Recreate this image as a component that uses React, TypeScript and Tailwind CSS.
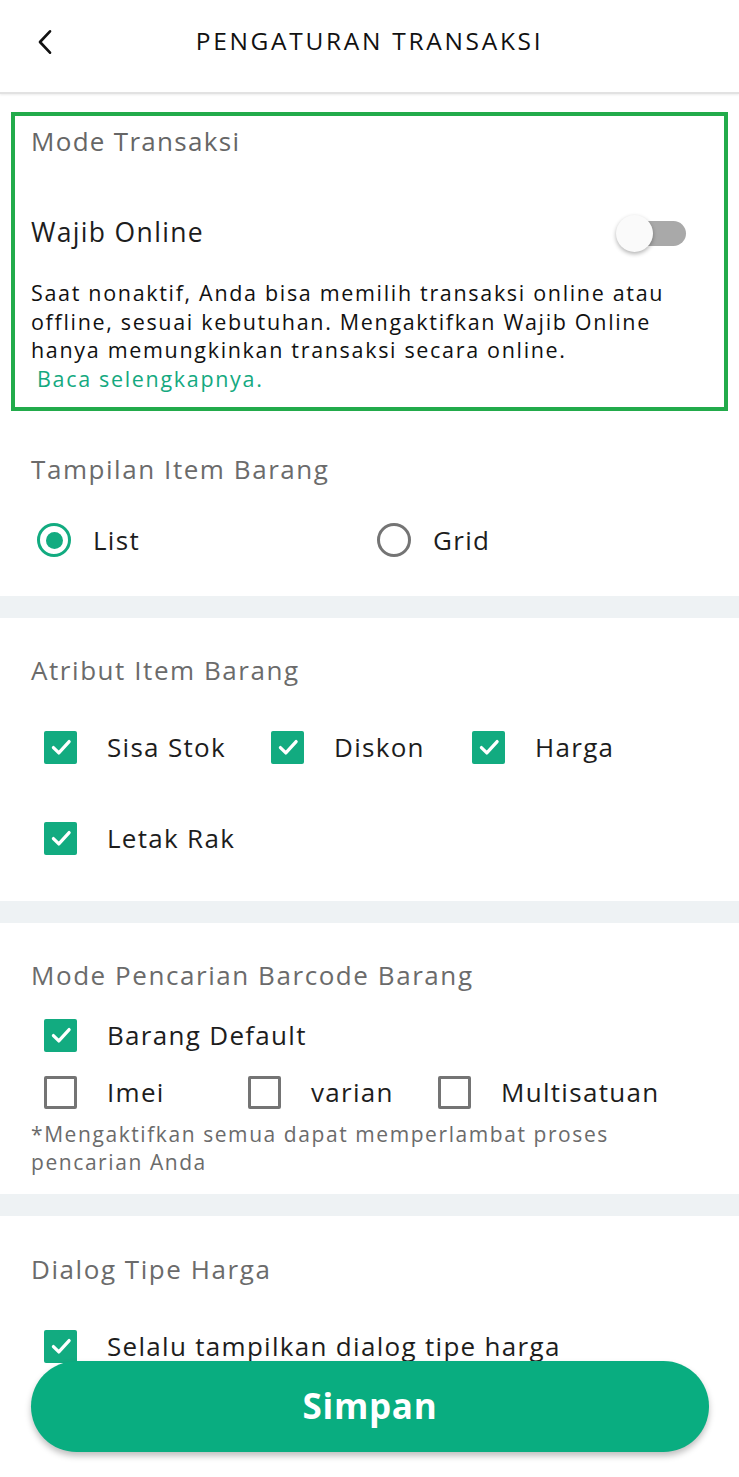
import type { ReactNode } from "react"

const font = { fontFamily: '"Open Sans", "Noto Sans", sans-serif' }

const Check = ({ checked = true }: { checked?: boolean }) =>
  checked ? (
    <span className="flex h-[33px] w-[33px] shrink-0 items-center justify-center rounded-[2px] bg-[#12ab80]">
      <svg viewBox="0 0 24 24" className="h-[26px] w-[26px]" fill="none" stroke="white" strokeWidth="3" strokeLinecap="round" strokeLinejoin="round">
        <polyline points="5,12.5 10,17.5 19.5,7" />
      </svg>
    </span>
  ) : (
    <span className="h-[33px] w-[33px] shrink-0 rounded-[2px] border-[3px] border-[#747474] bg-white" />
  )

const Radio = ({ checked }: { checked: boolean }) => (
  <span
    className={
      checked
        ? "flex h-[34px] w-[34px] items-center justify-center rounded-full border-[3.5px] border-[#12ab80]"
        : "h-[34px] w-[34px] rounded-full border-[3.5px] border-[#747474]"
    }
  >
    {checked && <span className="h-[17px] w-[17px] rounded-full bg-[#12ab80]" />}
  </span>
)

const Item = ({ checked = true, label, className = "" }: { checked?: boolean; label: string; className?: string }) => (
  <div className={`flex items-center ${className}`}>
    <Check checked={checked} />
    <span className="ml-[30px] whitespace-nowrap text-[26px] tracking-[0.05em] text-[#1d1d1d]">{label}</span>
  </div>
)

const Title = ({ children, className = "" }: { children: ReactNode; className?: string }) => (
  <div className={`flex h-[40px] items-center text-[26px] tracking-[0.06em] text-[#6b6b6b] ${className}`}>{children}</div>
)

const Divider = ({ className = "" }: { className?: string }) => <div className={`h-[22px] bg-[#eef2f4] ${className}`} />

export default function App() {
  return (
    <div className="relative h-[1477px] w-[739px] overflow-hidden bg-white" style={font}>
      <header className="relative flex h-[94px] items-center justify-center border-b-2 border-[#e2e2e2] shadow-[0_1px_2px_rgba(0,0,0,0.08)]">
        <svg viewBox="0 0 24 24" className="absolute left-[30px] top-[26px] h-[32px] w-[32px]" fill="none" stroke="#111" strokeWidth="2" strokeLinecap="round" strokeLinejoin="round">
          <polyline points="15,4 7.5,12 15,20" />
        </svg>
        <h1 className="-mt-[10px] text-[24.5px] tracking-[0.11em] text-[#111]">PENGATURAN TRANSAKSI</h1>
      </header>

      <section className="mx-[11px] mt-[18px] border-4 border-[#22ab4b] pl-4 pr-[38px]">
        <div className="flex h-[50px] items-center text-[26px] tracking-[0.05em] text-[#666]">Mode Transaksi</div>
        <div className="mt-[42px] flex h-[50px] items-center justify-between">
          <span className="text-[26.5px] tracking-[0.05em] text-[#1d1d1d]">Wajib Online</span>
          <div className="relative h-[37px] w-[70px]">
            <span className="absolute right-0 top-[6px] h-[25px] w-[56px] rounded-full bg-[#a9a9a9]" />
            <span className="absolute left-0 top-0 h-[37px] w-[37px] rounded-full bg-[#fafafa] shadow-[0_2px_4px_rgba(0,0,0,0.3)]" />
          </div>
        </div>
        <p className="mt-[21px] pb-[14px] text-[21.5px] leading-[28.5px] tracking-[0.078em] text-[#111]">
          Saat nonaktif, Anda bisa memilih transaksi online atau
          <br />
          offline, sesuai kebutuhan. Mengaktifkan Wajib Online
          <br />
          hanya memungkinkan transaksi secara online.
          <br />
          <span className="ml-[6px] text-[#14a97f]">Baca selengkapnya.</span>
        </p>
      </section>

      <div className="px-[31px]">
        <Title className="mt-[38px]">Tampilan Item Barang</Title>
        <div className="mt-[31px] flex h-[40px] items-center pl-[6px]">
          <div className="flex w-[340px] items-center">
            <Radio checked />
            <span className="ml-[22px] text-[26px] tracking-[0.05em] text-[#1d1d1d]">List</span>
          </div>
          <div className="flex items-center">
            <Radio checked={false} />
            <span className="ml-[22px] text-[26px] tracking-[0.05em] text-[#1d1d1d]">Grid</span>
          </div>
        </div>
      </div>

      <Divider className="mt-[36px]" />

      <div className="px-[31px]">
        <Title className="mt-[32px]">Atribut Item Barang</Title>
        <div className="mt-[37px] flex h-[40px] items-center pl-[13px]">
          <Item label="Sisa Stok" className="w-[227px]" />
          <Item label="Diskon" className="w-[201px]" />
          <Item label="Harga" />
        </div>
        <div className="mt-[51px] flex h-[40px] items-center pl-[13px]">
          <Item label="Letak Rak" />
        </div>
      </div>

      <Divider className="mt-[43px]" />

      <div className="px-[31px]">
        <Title className="mt-[32px]">Mode Pencarian Barcode Barang</Title>
        <div className="mt-[20px] flex h-[40px] items-center pl-[13px]">
          <Item label="Barang Default" />
        </div>
        <div className="mt-[17px] flex h-[40px] items-center pl-[13px]">
          <Item checked={false} label="Imei" className="w-[204px]" />
          <Item checked={false} label="varian" className="w-[190px]" />
          <Item checked={false} label="Multisatuan" />
        </div>
        <p className="mt-[8px] text-[21px] leading-[28px] tracking-[0.075em] text-[#6b6b6b]">
          *Mengaktifkan semua dapat memperlambat proses
          <br />
          pencarian Anda
        </p>
      </div>

      <Divider className="mt-[18px]" />

      <div className="px-[31px]">
        <Title className="mt-[33px]">Dialog Tipe Harga</Title>
        <div className="mt-[37px] flex h-[40px] items-center pl-[13px]">
          <Item label="Selalu tampilkan dialog tipe harga" />
        </div>
      </div>

      <button className="absolute left-[31px] top-[1361px] flex h-[91px] w-[678px] items-center justify-center rounded-full bg-[#09ad80] text-[35px] font-bold tracking-[0.02em] text-white shadow-[0_4px_6px_rgba(0,0,0,0.25)]">
        Simpan
      </button>
    </div>
  )
}
